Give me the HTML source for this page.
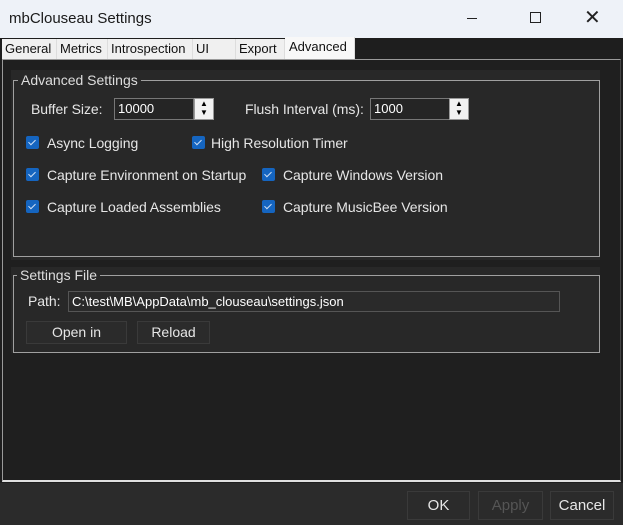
<!DOCTYPE html>
<html><head><style>
*{box-sizing:border-box;margin:0;padding:0}
body{width:623px;height:525px;background:#1e1e1e;font-family:"Liberation Sans",Arial,sans-serif;font-size:14px;color:#e6e6e6;position:relative;overflow:hidden}
.abs{position:absolute}
#title{left:0;top:0;width:623px;height:38px;background:#eef2f8;color:#1a1a1a;font-size:15px}
#tabs{left:0;top:38px;width:623px;height:21px;background:#1e1e1e}
.tab{position:absolute;top:1px;height:20px;background:#f0f0f0;color:#111;font-size:13px;line-height:20px;padding-left:3px;border-right:1px solid #ddd}
#panel{left:2px;top:59px;width:619px;height:423px;background:#1f1f1f;border-top:1px solid #9a9a9a;border-left:1px solid #9a9a9a;border-bottom:2px solid #e0e0e0;border-right:1px solid #444}
.grp{position:absolute;border:1px solid #a0a0a0}
.legend{position:absolute;top:-9px;left:4px;background:#282828;padding:0 3px;font-size:14px;color:#ddd}
.chk{position:absolute;width:13px;height:13px;background:#1565c0;border-radius:2px}
.chk:after{content:"";position:absolute;left:4px;top:2px;width:3px;height:6px;border:solid #cfe0f5;border-width:0 1.3px 1.3px 0;transform:rotate(45deg)}
.lbl{position:absolute;font-size:14px;color:#e6e6e6;letter-spacing:-0.05px}
.inp{position:absolute;background:#252525;border:1px solid #777;color:#fff;font-size:13px;padding-left:3px;line-height:20px}
.spin{position:absolute;width:20px;height:20px;background:#f2f2f2;border:1px solid #999}
.btn{position:absolute;background:#2b2b2b;border:1px solid #3a3a3a;text-align:center;font-size:14px;color:#e6e6e6}
</style></head><body>
<div id="title" class="abs">
 <div class="abs" style="left:9px;top:10px">mbClouseau Settings</div>
 <div class="abs" style="left:467px;top:18px;width:10px;height:1px;background:#222"></div>
 <div class="abs" style="left:530px;top:12px;width:11px;height:11px;border:1.3px solid #222"></div>
 <div class="abs" style="left:584px;top:5px;font-size:20px;color:#222">✕</div>
</div>
<div id="tabs" class="abs">
 <div class="tab" style="left:2px;width:55px">General</div>
 <div class="tab" style="left:57px;width:51px">Metrics</div>
 <div class="tab" style="left:108px;width:85px">Introspection</div>
 <div class="tab" style="left:193px;width:43px">UI</div>
 <div class="tab" style="left:236px;width:49px">Export</div>
 <div class="tab" style="left:285px;top:-1px;height:22px;width:70px;background:#f8f8f8;padding-left:4px">Advanced</div>
</div>
<div id="panel" class="abs">
 <div class="abs" style="left:8px;top:10px;width:589px;height:190px;background:#282828"></div>
 <div class="grp" style="left:10px;top:20px;width:587px;height:177px">
  <div class="legend">Advanced Settings</div>
 </div>
 <div class="lbl" style="left:28px;top:41px">Buffer Size:</div>
 <div class="inp" style="left:111px;top:38px;width:80px;height:22px">10000</div>
 <div class="spin" style="left:191px;top:38px;height:22px"><div style="font-size:8px;color:#000;text-align:center;line-height:9px">▲<br>▼</div></div>
 <div class="lbl" style="left:242px;top:41px">Flush Interval (ms):</div>
 <div class="inp" style="left:367px;top:38px;width:80px;height:22px">1000</div>
 <div class="spin" style="left:446px;top:38px;height:22px"><div style="font-size:8px;color:#000;text-align:center;line-height:9px">▲<br>▼</div></div>

 <div class="chk" style="left:23px;top:76px"></div><div class="lbl" style="left:44px;top:75px">Async Logging</div>
 <div class="chk" style="left:189px;top:76px"></div><div class="lbl" style="left:208px;top:75px">High Resolution Timer</div>
 <div class="chk" style="left:23px;top:108px"></div><div class="lbl" style="left:44px;top:107px">Capture Environment on Startup</div>
 <div class="chk" style="left:259px;top:108px"></div><div class="lbl" style="left:280px;top:107px">Capture Windows Version</div>
 <div class="chk" style="left:23px;top:140px"></div><div class="lbl" style="left:44px;top:139px">Capture Loaded Assemblies</div>
 <div class="chk" style="left:259px;top:140px"></div><div class="lbl" style="left:280px;top:139px">Capture MusicBee Version</div>

 <div class="abs" style="left:8px;top:207px;width:589px;height:86px;background:#282828"></div>
 <div class="grp" style="left:10px;top:215px;width:587px;height:78px">
  <div class="legend" style="left:3px">Settings File</div>
 </div>
 <div class="lbl" style="left:25px;top:233px">Path:</div>
 <div class="inp" style="left:65px;top:231px;width:492px;height:21px;border-color:#555;background:#2a2a2a">C:\test\MB\AppData\mb_clouseau\settings.json</div>
 <div class="btn" style="left:23px;top:261px;width:101px;height:23px;line-height:21px">Open in</div>
 <div class="btn" style="left:134px;top:261px;width:73px;height:23px;line-height:21px">Reload</div>
</div>
<div class="abs" style="left:0;top:483px;width:623px;height:42px;background:#2b2b2b"></div>
<div class="btn" style="left:407px;top:491px;width:63px;height:29px;line-height:27px;font-size:15px">OK</div>
<div class="btn" style="left:478px;top:491px;width:65px;height:29px;line-height:27px;font-size:15px;color:#555">Apply</div>
<div class="btn" style="left:550px;top:491px;width:64px;height:29px;line-height:27px;font-size:15px">Cancel</div>
</body></html>
